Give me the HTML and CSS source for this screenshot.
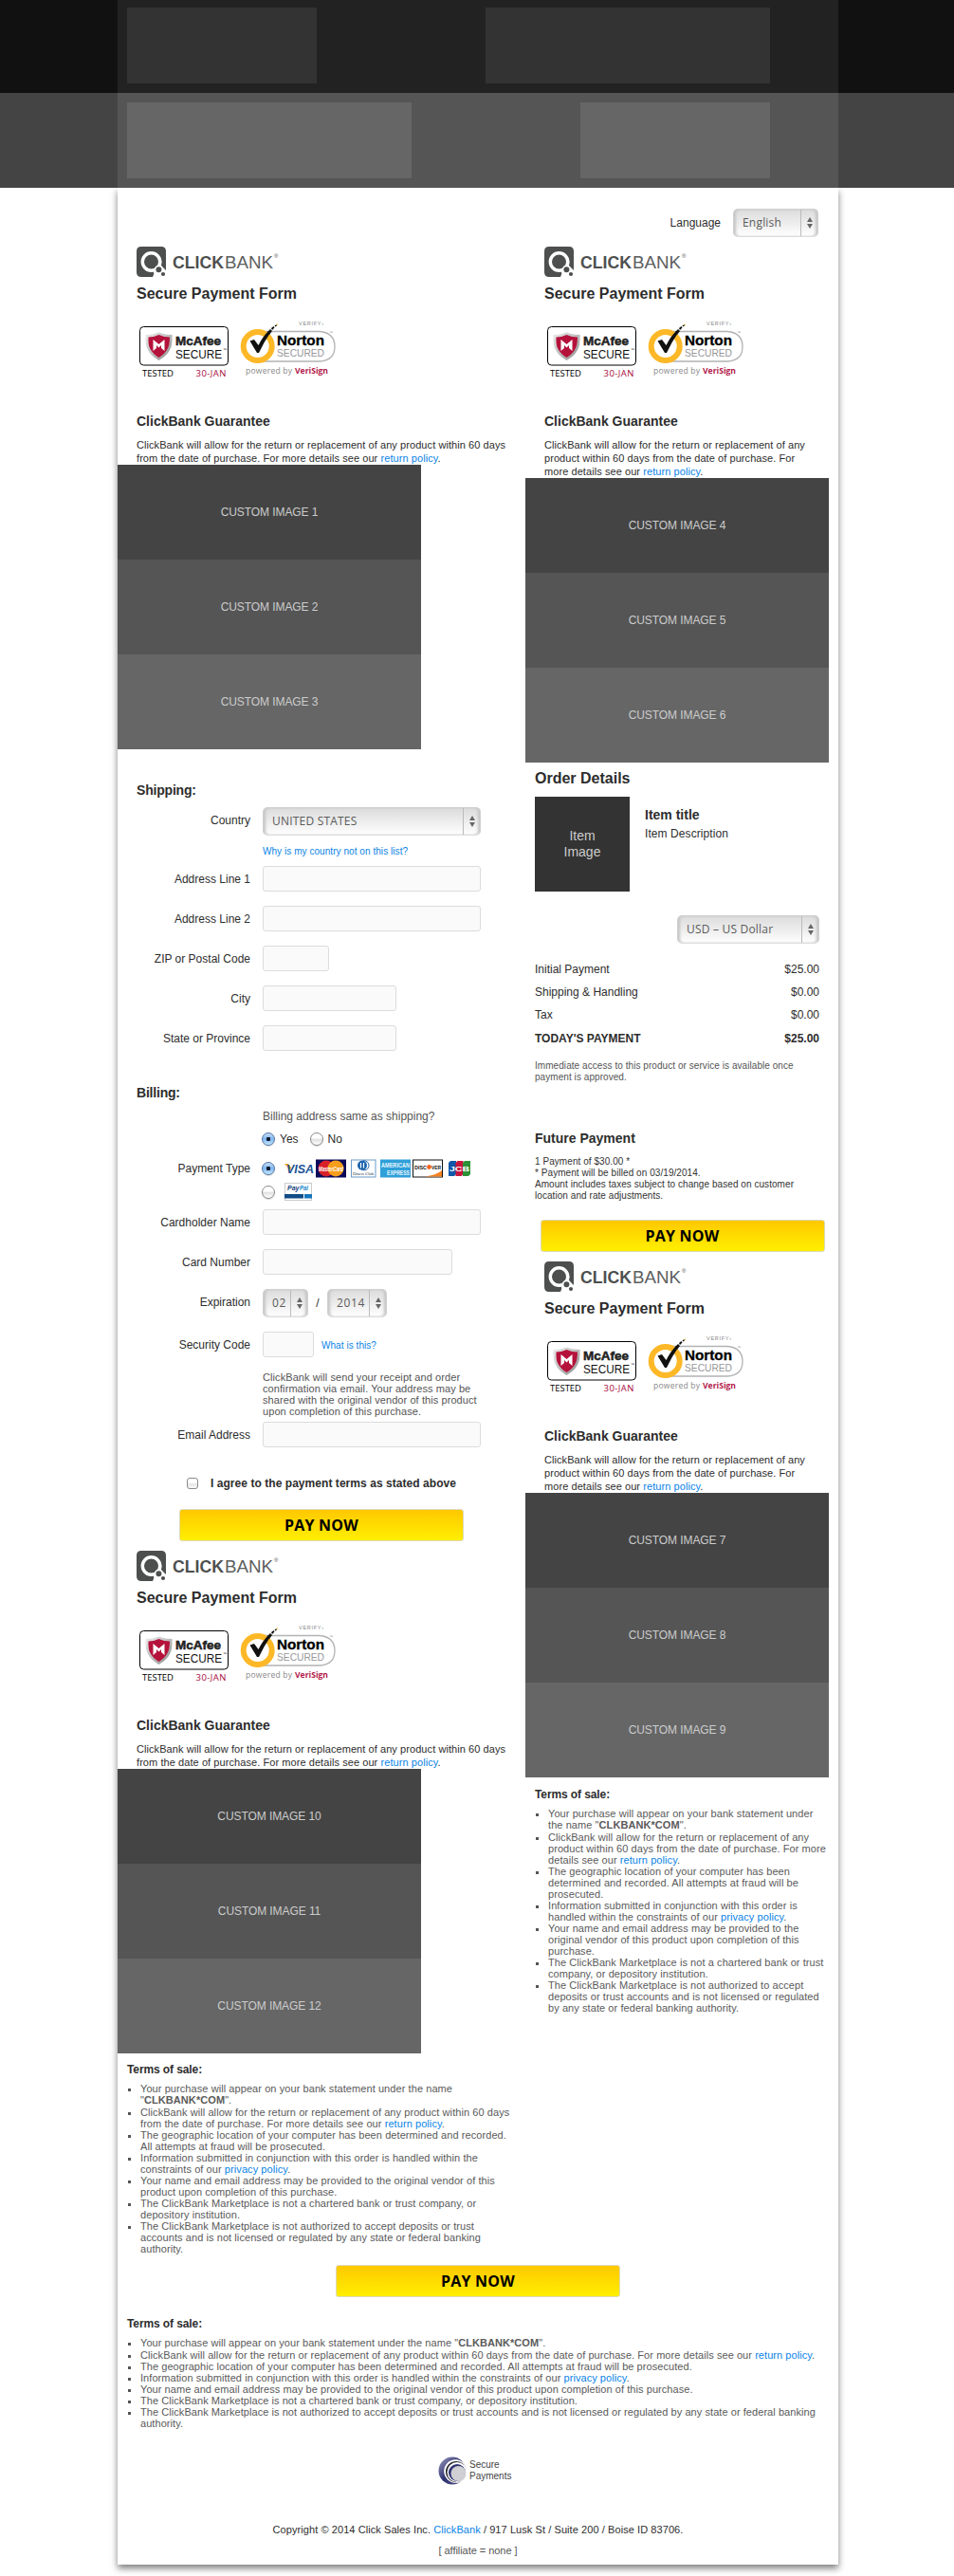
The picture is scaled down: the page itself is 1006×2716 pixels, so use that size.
FILE: index.html
```
<!DOCTYPE html>
<html lang="en">
<head>
<meta charset="utf-8">
<title>ClickBank Secure Payment Form</title>
<link rel="stylesheet" href="styles.css">
</head>
<body>
<svg class="defs" width="0" height="0" aria-hidden="true">
  <defs>
    <linearGradient id="silver" x1="0" y1="0" x2="1" y2="1"><stop offset="0" stop-color="#eee"/><stop offset="1" stop-color="#8c8c8c"/></linearGradient>
    <linearGradient id="swirl" x1="0" y1="0" x2="1" y2="1"><stop offset="0" stop-color="#9a9cc0"/><stop offset=".5" stop-color="#2f3270"/><stop offset="1" stop-color="#55588c"/></linearGradient>
    <symbol id="cb-mark" viewBox="0 0 32 32">
      <path d="M5 0H26Q31 0 31 5V25L26 20Q28 11 20 7Q12 4 7 11Q3 20 11 25Q15 27 18 26Q19 29 17 32H5Q0 32 0 27V5Q0 0 5 0Z" fill="#4d4f4f"/>
      <circle cx="15.5" cy="16" r="9.2" fill="#4d4f4f" stroke="#fff" stroke-width="3.4"/>
      <circle cx="23.4" cy="24.2" r="3.8" fill="#4d4f4f" stroke="#fff" stroke-width="1.6"/>
      <circle cx="28" cy="29" r="2.1" fill="#4d4f4f"/>
    </symbol>
    <symbol id="mcafee-art" viewBox="0 0 100 64">
      <rect x="3.5" y="8.5" width="93" height="40.500" rx="4" fill="#fff" stroke="#000"/>
      <path d="M9.500 17Q17 17 23.500 14.500Q30 17 37.500 17Q38 28 35 33Q32 39 23.500 44Q15 39 12 33Q9 28 9.500 17Z" fill="url(#silver)"/>
      <path d="M12.500 19.500Q18 19.500 23.500 17Q29 19.500 35 19.500Q35 28 32.500 32Q30 37 23.500 41Q17 37 14.500 32Q12 28 12.500 19.500Z" fill="#b5123b"/>
      <path d="M17.500 34V22L23.500 27L29.500 22V34L26 31V28L23.500 30.500L21 28V31Z" fill="#fff"/>
    </symbol>
    <symbol id="norton-art" viewBox="100 0 120 64">
      <path d="M127 13.500H193Q209 15 209 29.500Q209 44 193 45H127" fill="#fff" stroke="#b2b3b5" stroke-width="1.300"/>
      <circle cx="127.700" cy="29" r="15" fill="#fff" stroke="#fdb827" stroke-width="6"/>
      <path d="M119.500 23.500L124 22L128.500 28Q133 19 139 13L141 15Q134 25 129 36H127Z" fill="#111"/>
      <path d="M138 14l3-3 2 2-3 4zM142 10l2.500-2 1 1.500-2.500 2.500zM145.500 7.500l2-1.500.5 1.300-1.500 1.200z" fill="#111"/>
      <path d="M147 6.500l2-1v1.500z" fill="#fdb827"/>
    </symbol>
  </defs>
</svg>

<div class="band band-dark"><div class="band-inner"><div class="slot narrow"></div><div class="slot wide"></div></div></div>
<div class="band band-light"><div class="band-inner"><div class="slot wide"></div><div class="slot narrow"></div></div></div>

<main class="sheet">
  <div class="language"><label>Language</label><div class="select sel-lang"><span>English</span><i class="arrows"></i></div></div>

  <div class="columns">
    <div class="col-left">
      <section class="brand">
        <svg class="logo" width="170" height="32"><use href="#cb-mark" width="32" height="32"/><text class="lg-click" x="38" y="23" textLength="54" lengthAdjust="spacingAndGlyphs">CLICK</text><text class="lg-bank" x="93" y="23" textLength="51" lengthAdjust="spacingAndGlyphs">BANK</text><text class="lg-reg" x="145" y="12">®</text></svg>
        <h1>Secure Payment Form</h1>
        <svg class="badges" width="220" height="64"><use href="#mcafee-art" width="100" height="64"/><use href="#norton-art" x="100" width="120" height="64"/><text class="mc-name" x="41" y="28" textLength="48" lengthAdjust="spacingAndGlyphs">McAfee</text><text class="mc-secure" x="41" y="42" textLength="49" lengthAdjust="spacingAndGlyphs">SECURE</text><text class="tiny-tm" x="91" y="34">™</text><text class="mc-foot" x="6" y="61" textLength="33">TESTED</text><text class="mc-foot mc-date" x="62.500" y="61" textLength="32">30-JAN</text><text class="nt-verify" x="171" y="6.500" textLength="26">VERIFY›</text><text class="tiny-tm nt-tm" x="203" y="16">™</text><text class="nt-name" x="148" y="28" textLength="50" lengthAdjust="spacingAndGlyphs">Norton</text><text class="nt-secured" x="148" y="40" textLength="50" lengthAdjust="spacingAndGlyphs">SECURED</text><text class="nt-foot" x="115" y="58" textLength="49">powered by</text><text class="nt-vs" x="167" y="58" textLength="35" lengthAdjust="spacingAndGlyphs">VeriSign</text></svg>
        <h2>ClickBank Guarantee</h2>
        <p>ClickBank will allow for the return or replacement of any product within 60 days from the date of purchase. For more details see our <a>return policy</a>.</p>
      </section>
      <div class="images"><div>CUSTOM IMAGE 1</div><div>CUSTOM IMAGE 2</div><div>CUSTOM IMAGE 3</div></div>

      <h2 class="form-title shipping">Shipping:</h2>
      <div class="row tall"><label>Country</label><div class="select sel-country"><span>UNITED STATES</span><i class="arrows"></i></div></div>
      <div class="row link-row"><a class="small">Why is my country not on this list?</a></div>
      <div class="row"><label>Address Line 1</label><div class="input"></div></div>
      <div class="row"><label>Address Line 2</label><div class="input"></div></div>
      <div class="row"><label>ZIP or Postal Code</label><div class="input w70"></div></div>
      <div class="row"><label>City</label><div class="input w141"></div></div>
      <div class="row"><label>State or Province</label><div class="input w141"></div></div>

      <h2 class="form-title billing">Billing:</h2>
      <div class="row question">Billing address same as shipping?</div>
      <div class="row yesno"><i class="radio on"></i><span>Yes</span><i class="radio"></i><span>No</span></div>
      <div class="row pay-type"><label>Payment Type</label><i class="radio on"></i>
        <svg class="cards" width="200" height="20">
          <path d="M0 5h4l3 4-1 3z" fill="#f0a11f"/>
          <text class="visa" x="2" y="15" textLength="29" lengthAdjust="spacingAndGlyphs">VISA</text>
          <rect x="33" y=".5" width="32" height="19" fill="#0a0a5a"/><circle cx="44" cy="10" r="8.500" fill="#d8202a"/><circle cx="54" cy="10" r="8.500" fill="#f79e1b"/>
          <text class="mastercard" x="36" y="12.500" textLength="26" lengthAdjust="spacingAndGlyphs">MasterCard</text>
          <rect x="70.500" y="1" width="25.500" height="18" fill="#fff" stroke="#6a9bcb"/><circle cx="82" cy="6.800" r="5" fill="#1c63ad"/><circle cx="84" cy="6.800" r="5" fill="none" stroke="#1c63ad"/><path d="M80.500 4v5.600M83.500 4v5.600" stroke="#fff" stroke-width="1.200"/>
          <text class="diners" x="72" y="16.500" textLength="22" lengthAdjust="spacingAndGlyphs">Diners Club</text>
          <rect x="101" y=".5" width="32" height="19" fill="#2f9fd8"/>
          <text class="amex" x="102" y="8.500" textLength="30" lengthAdjust="spacingAndGlyphs">AMERICAN</text><text class="amex" x="108" y="16.500" textLength="24" lengthAdjust="spacingAndGlyphs">EXPRESS</text>
          <rect x="135.500" y="1" width="31" height="18" fill="#fff" stroke="#111"/><path d="M148 18.500Q160 17 166 12V18.500Z" fill="#f58220"/><circle cx="152.500" cy="8.500" r="2.400" fill="#f26522"/>
          <text class="discover" x="137" y="10.700" textLength="13" lengthAdjust="spacingAndGlyphs">DISC</text><text class="discover" x="155" y="10.700" textLength="10" lengthAdjust="spacingAndGlyphs">VER</text>
          <path d="M175 2h6v14l-2 2h-6V4z" fill="#1257a8"/><path d="M182.500 2h6v14l-2 2h-6V4z" fill="#c8153c"/><path d="M190 2h6v14l-2 2h-6V4z" fill="#2d9138"/>
          <text class="jcb" x="174" y="13" textLength="21" lengthAdjust="spacingAndGlyphs">JCB</text>
        </svg>
      </div>
      <div class="row paypal"><i class="radio"></i>
        <svg class="cards" width="30" height="20"><rect x=".5" y=".5" width="28" height="18" fill="#fff" stroke="#ccc"/><text class="pp" x="3" y="8" textLength="12.500" lengthAdjust="spacingAndGlyphs">Pay</text><text class="pp pal" x="16" y="8" textLength="9" lengthAdjust="spacingAndGlyphs">Pal</text><path d="M0 12h20v4.500H0z" fill="#114b86"/><path d="M21 12h8v4.500h-8z" fill="#1577bd"/></svg>
      </div>
      <div class="row"><label>Cardholder Name</label><div class="input"></div></div>
      <div class="row"><label>Card Number</label><div class="input w200"></div></div>
      <div class="row tall"><label>Expiration</label><div class="select sel-month"><span>02</span><i class="arrows"></i></div><em>/</em><div class="select sel-year"><span>2014</span><i class="arrows"></i></div></div>
      <div class="row"><label>Security Code</label><div class="input w54"></div><a class="small what">What is this?</a></div>
      <div class="row note"><p>ClickBank will send your receipt and order confirmation via email. Your address may be shared with the original vendor of this product upon completion of this purchase.</p></div>
      <div class="row"><label>Email Address</label><div class="input"></div></div>
      <div class="agree"><i class="check"></i><span>I agree to the payment terms as stated above</span></div>
      <div class="pay pay-left">PAY NOW</div>

      <section class="brand">
        <svg class="logo" width="170" height="32"><use href="#cb-mark" width="32" height="32"/><text class="lg-click" x="38" y="23" textLength="54" lengthAdjust="spacingAndGlyphs">CLICK</text><text class="lg-bank" x="93" y="23" textLength="51" lengthAdjust="spacingAndGlyphs">BANK</text><text class="lg-reg" x="145" y="12">®</text></svg>
        <h1>Secure Payment Form</h1>
        <svg class="badges" width="220" height="64"><use href="#mcafee-art" width="100" height="64"/><use href="#norton-art" x="100" width="120" height="64"/><text class="mc-name" x="41" y="28" textLength="48" lengthAdjust="spacingAndGlyphs">McAfee</text><text class="mc-secure" x="41" y="42" textLength="49" lengthAdjust="spacingAndGlyphs">SECURE</text><text class="tiny-tm" x="91" y="34">™</text><text class="mc-foot" x="6" y="61" textLength="33">TESTED</text><text class="mc-foot mc-date" x="62.500" y="61" textLength="32">30-JAN</text><text class="nt-verify" x="171" y="6.500" textLength="26">VERIFY›</text><text class="tiny-tm nt-tm" x="203" y="16">™</text><text class="nt-name" x="148" y="28" textLength="50" lengthAdjust="spacingAndGlyphs">Norton</text><text class="nt-secured" x="148" y="40" textLength="50" lengthAdjust="spacingAndGlyphs">SECURED</text><text class="nt-foot" x="115" y="58" textLength="49">powered by</text><text class="nt-vs" x="167" y="58" textLength="35" lengthAdjust="spacingAndGlyphs">VeriSign</text></svg>
        <h2>ClickBank Guarantee</h2>
        <p>ClickBank will allow for the return or replacement of any product within 60 days from the date of purchase. For more details see our <a>return policy</a>.</p>
      </section>
      <div class="images"><div>CUSTOM IMAGE 10</div><div>CUSTOM IMAGE 11</div><div>CUSTOM IMAGE 12</div></div>
      <section class="terms terms-left">
        <h3>Terms of sale:</h3>
        <ul>
          <li>Your purchase will appear on your bank statement under the name "<strong>CLKBANK*COM</strong>".</li>
          <li>ClickBank will allow for the return or replacement of any product within 60 days from the date of purchase. For more details see our <a>return policy</a>.</li>
          <li>The geographic location of your computer has been determined and recorded. All attempts at fraud will be prosecuted.</li>
          <li>Information submitted in conjunction with this order is handled within the constraints of our <a>privacy policy</a>.</li>
          <li>Your name and email address may be provided to the original vendor of this product upon completion of this purchase.</li>
          <li>The ClickBank Marketplace is not a chartered bank or trust company, or depository institution.</li>
          <li>The ClickBank Marketplace is not authorized to accept deposits or trust accounts and is not licensed or regulated by any state or federal banking authority.</li>
        </ul>
      </section>
    </div>

    <div class="col-right">
      <section class="brand">
        <svg class="logo" width="170" height="32"><use href="#cb-mark" width="32" height="32"/><text class="lg-click" x="38" y="23" textLength="54" lengthAdjust="spacingAndGlyphs">CLICK</text><text class="lg-bank" x="93" y="23" textLength="51" lengthAdjust="spacingAndGlyphs">BANK</text><text class="lg-reg" x="145" y="12">®</text></svg>
        <h1>Secure Payment Form</h1>
        <svg class="badges" width="220" height="64"><use href="#mcafee-art" width="100" height="64"/><use href="#norton-art" x="100" width="120" height="64"/><text class="mc-name" x="41" y="28" textLength="48" lengthAdjust="spacingAndGlyphs">McAfee</text><text class="mc-secure" x="41" y="42" textLength="49" lengthAdjust="spacingAndGlyphs">SECURE</text><text class="tiny-tm" x="91" y="34">™</text><text class="mc-foot" x="6" y="61" textLength="33">TESTED</text><text class="mc-foot mc-date" x="62.500" y="61" textLength="32">30-JAN</text><text class="nt-verify" x="171" y="6.500" textLength="26">VERIFY›</text><text class="tiny-tm nt-tm" x="203" y="16">™</text><text class="nt-name" x="148" y="28" textLength="50" lengthAdjust="spacingAndGlyphs">Norton</text><text class="nt-secured" x="148" y="40" textLength="50" lengthAdjust="spacingAndGlyphs">SECURED</text><text class="nt-foot" x="115" y="58" textLength="49">powered by</text><text class="nt-vs" x="167" y="58" textLength="35" lengthAdjust="spacingAndGlyphs">VeriSign</text></svg>
        <h2>ClickBank Guarantee</h2>
        <p>ClickBank will allow for the return or replacement of any product within 60 days from the date of purchase. For more details see our <a>return policy</a>.</p>
      </section>
      <div class="images"><div>CUSTOM IMAGE 4</div><div>CUSTOM IMAGE 5</div><div>CUSTOM IMAGE 6</div></div>

      <section class="order">
        <h1>Order Details</h1>
        <div class="item"><div class="item-image">Item<br>Image</div><div class="item-text"><h2>Item title</h2><p>Item Description</p></div></div>
        <div class="currency"><div class="select sel-usd"><span>USD – US Dollar</span><i class="arrows"></i></div></div>
        <dl class="totals">
          <dt>Initial Payment</dt><dd>$25.00</dd>
          <dt>Shipping &amp; Handling</dt><dd>$0.00</dd>
          <dt>Tax</dt><dd>$0.00</dd>
          <dt class="total">TODAY'S PAYMENT</dt><dd class="total">$25.00</dd>
        </dl>
        <p class="fine">Immediate access to this product or service is available once payment is approved.</p>
        <h2 class="future">Future Payment</h2>
        <p class="fine dark">1 Payment of $30.00 *<br>* Payment will be billed on 03/19/2014.<br>Amount includes taxes subject to change based on customer location and rate adjustments.</p>
      </section>
      <div class="pay pay-right">PAY NOW</div>

      <section class="brand">
        <svg class="logo" width="170" height="32"><use href="#cb-mark" width="32" height="32"/><text class="lg-click" x="38" y="23" textLength="54" lengthAdjust="spacingAndGlyphs">CLICK</text><text class="lg-bank" x="93" y="23" textLength="51" lengthAdjust="spacingAndGlyphs">BANK</text><text class="lg-reg" x="145" y="12">®</text></svg>
        <h1>Secure Payment Form</h1>
        <svg class="badges" width="220" height="64"><use href="#mcafee-art" width="100" height="64"/><use href="#norton-art" x="100" width="120" height="64"/><text class="mc-name" x="41" y="28" textLength="48" lengthAdjust="spacingAndGlyphs">McAfee</text><text class="mc-secure" x="41" y="42" textLength="49" lengthAdjust="spacingAndGlyphs">SECURE</text><text class="tiny-tm" x="91" y="34">™</text><text class="mc-foot" x="6" y="61" textLength="33">TESTED</text><text class="mc-foot mc-date" x="62.500" y="61" textLength="32">30-JAN</text><text class="nt-verify" x="171" y="6.500" textLength="26">VERIFY›</text><text class="tiny-tm nt-tm" x="203" y="16">™</text><text class="nt-name" x="148" y="28" textLength="50" lengthAdjust="spacingAndGlyphs">Norton</text><text class="nt-secured" x="148" y="40" textLength="50" lengthAdjust="spacingAndGlyphs">SECURED</text><text class="nt-foot" x="115" y="58" textLength="49">powered by</text><text class="nt-vs" x="167" y="58" textLength="35" lengthAdjust="spacingAndGlyphs">VeriSign</text></svg>
        <h2>ClickBank Guarantee</h2>
        <p>ClickBank will allow for the return or replacement of any product within 60 days from the date of purchase. For more details see our <a>return policy</a>.</p>
      </section>
      <div class="images"><div>CUSTOM IMAGE 7</div><div>CUSTOM IMAGE 8</div><div>CUSTOM IMAGE 9</div></div>
      <section class="terms terms-right">
        <h3>Terms of sale:</h3>
        <ul>
          <li>Your purchase will appear on your bank statement under the name "<strong>CLKBANK*COM</strong>".</li>
          <li>ClickBank will allow for the return or replacement of any product within 60 days from the date of purchase. For more details see our <a>return policy</a>.</li>
          <li>The geographic location of your computer has been determined and recorded. All attempts at fraud will be prosecuted.</li>
          <li>Information submitted in conjunction with this order is handled within the constraints of our <a>privacy policy</a>.</li>
          <li>Your name and email address may be provided to the original vendor of this product upon completion of this purchase.</li>
          <li>The ClickBank Marketplace is not a chartered bank or trust company, or depository institution.</li>
          <li>The ClickBank Marketplace is not authorized to accept deposits or trust accounts and is not licensed or regulated by any state or federal banking authority.</li>
        </ul>
      </section>
    </div>
  </div>

  <div class="pay pay-center">PAY NOW</div>
  <section class="terms terms-full">
    <h3>Terms of sale:</h3>
    <ul>
      <li>Your purchase will appear on your bank statement under the name "<strong>CLKBANK*COM</strong>".</li>
      <li>ClickBank will allow for the return or replacement of any product within 60 days from the date of purchase. For more details see our <a>return policy</a>.</li>
      <li>The geographic location of your computer has been determined and recorded. All attempts at fraud will be prosecuted.</li>
      <li>Information submitted in conjunction with this order is handled within the constraints of our <a>privacy policy</a>.</li>
      <li>Your name and email address may be provided to the original vendor of this product upon completion of this purchase.</li>
      <li>The ClickBank Marketplace is not a chartered bank or trust company, or depository institution.</li>
      <li>The ClickBank Marketplace is not authorized to accept deposits or trust accounts and is not licensed or regulated by any state or federal banking authority.</li>
    </ul>
  </section>

  <div class="secure">
    <svg width="30" height="30" viewBox="0 0 30 30"><circle cx="15" cy="15" r="14.500" fill="url(#swirl)"/><circle cx="18.500" cy="15.500" r="12.300" fill="#fff"/><circle cx="19" cy="16" r="11" fill="#26262e"/><circle cx="20" cy="16.500" r="10.500" fill="#fff"/><circle cx="20" cy="17" r="9" fill="#2f3270"/><circle cx="21.500" cy="18" r="8" fill="#cfcfd4"/></svg>
    <span>Secure<br>Payments</span>
  </div>
  <footer>
    <p>Copyright © 2014 Click Sales Inc. <a>ClickBank</a> / 917 Lusk St / Suite 200 / Boise ID 83706.</p>
    <p class="affiliate">[ affiliate = none ]</p>
  </footer>
</main>
</body>
</html>
```
FILE: styles.css
```
* { box-sizing: border-box; }
body { margin: 0; background: #fff; color: #2d2d2d; font: 12px/14px "Liberation Sans", Arial, sans-serif; }
h1, h2, h3, p, ul, dl, dd { margin: 0; padding: 0; }
h1 { font-size: 16px; line-height: 20px; }
h2 { font-size: 14px; line-height: 18px; }
h3 { font-size: 12px; line-height: 14px; letter-spacing: -.1px; }
a { color: #0a84e6; text-decoration: none; }
em { font-style: normal; }
.defs { position: absolute; }

/* Header bands */
.band-inner { width: 760px; margin: 0 auto 0 124px; display: flex; justify-content: space-between; padding-left: 10px; padding-right: 72px; }
.band-dark { background: #111; }
.band-dark .band-inner { background: #222; height: 98px; padding-top: 8px; }
.band-dark .slot { background: #333; }
.band-light { background: #444; }
.band-light .band-inner { background: #555; height: 100px; padding-top: 10px; }
.band-light .slot { background: #666; }
.slot { height: 80px; }
.narrow { width: 200px; }
.wide { width: 300px; }

.sheet { width: 760px; height: 2506px; margin: 0 auto 12px 124px; background: #fff; box-shadow: 0 4px 7px rgba(0, 0, 0, .5); clip-path: inset(0 -12px -12px -12px); }
.language { height: 62px; padding: 22px 21px 0 0; display: flex; justify-content: flex-end; gap: 13px; }
.language label { line-height: 30px; }
.columns { display: grid; grid-template-columns: 430px 330px; height: 2128px; align-items: start; }

/* Brand block */
.brand { padding: 0 20px; }
.brand svg { display: block; }
.brand h1 { margin-top: 8px; }
.brand .badges { margin-top: 16px; }
.brand h2 { margin-top: 35px; }
.brand p { margin: 9px -15px 0 0; font-size: 11px; letter-spacing: .072px; }
.col-right .brand p { margin-right: 0; }
svg text { font-family: "Liberation Sans", Arial, sans-serif; }
.lg-click { font: bold 19px "Liberation Sans", sans-serif; fill: #4d4f4f; }
.lg-bank { font-size: 19px; fill: #5c5e5e; }
.lg-reg { font-size: 6px; fill: #4d4f4f; }
svg .mc-name { font: bold 13px "Liberation Sans", sans-serif; fill: #222; stroke: #222; stroke-width: .5px; }
svg .mc-secure { font: 13.500px "Liberation Sans", sans-serif; fill: #111; }
svg .mc-foot { font: 9.500px "Open Sans", sans-serif; fill: #000; }
svg .mc-date { fill: #a6093d; }
.tiny-tm { font-size: 4px; }
.nt-tm { fill: #888; }
.nt-verify { font-size: 5.500px; fill: #888; }
svg .nt-name { font: bold 15px "Liberation Sans", sans-serif; fill: #000; stroke: #000; stroke-width: .3px; }
.nt-secured { font-size: 11px; fill: #97989a; }
svg .nt-foot { font: 500 8.500px "Open Sans", sans-serif; fill: #888; }
svg .nt-vs { font: bold 8.500px "Open Sans", sans-serif; fill: #b2194a; }

.images { width: 320px; color: #ccc; text-align: center; line-height: 100px; letter-spacing: -.08px; }
.images div { height: 100px; background: #444; }
.images div:nth-child(2) { background: #555; }
.images div:nth-child(3) { background: #666; }

/* Form */
.form-title { padding-left: 20px; letter-spacing: -.2px; }
.shipping { margin: 34px 0 9px; }
.billing { margin: 35px 0 9px; }
.row { display: flex; height: 27px; margin-bottom: 15px; padding-left: 153px; }
.row label { width: 140px; margin-left: -153px; margin-right: 13px; text-align: right; line-height: 28px; }
.tall { height: 30px; }
.link-row { height: 12px; margin: -4px 0 9px; }
.small { font-size: 10px; line-height: 12px; letter-spacing: .055px; }
.input { width: 230px; height: 27px; background: #fafafa; border: 1px solid #dcdcdc; border-radius: 3px; }
.w70 { width: 70px; }
.w141 { width: 141px; }
.w200 { width: 200px; }
.w54 { width: 54px; }
.question { height: 14px; margin-bottom: 9px; color: #555; }
.yesno { height: 16px; margin-bottom: 13px; padding-left: 152px; line-height: 16px; align-items: center; }
.yesno span { margin: 0 12px 0 5px; }
.radio { flex: none; width: 14px; height: 14px; border: 1px solid #8a8a8a; border-radius: 50%; background: linear-gradient(#fff 40%, #e2e2e2 55%, #fff); box-shadow: 0 1px 1px rgba(0, 0, 0, .15); }
.radio.on { border-color: #5574a5; background: radial-gradient(circle at 50% 50%, #111a2c 0 2px, transparent 2.500px), linear-gradient(#c5ddf7, #7fb5f0 50%, #c4eaff); }
.pay-type { height: 20px; margin-bottom: 5px; padding-left: 152px; align-items: center; }
.pay-type label { margin-left: -152px; margin-right: 12px; line-height: 20px; }
.cards { margin-left: 10px; }
.paypal { height: 20px; margin-bottom: 8px; padding-left: 152px; align-items: center; }
svg .visa { font: italic bold 13.500px "Liberation Sans", sans-serif; fill: #1b5294; }
svg .mastercard { font: italic bold 6.500px "Liberation Sans", sans-serif; fill: #fff; }
svg .diners { font: 5px "Liberation Serif", serif; fill: #234; }
svg .amex { font: bold 6.500px "Liberation Sans", sans-serif; fill: #e5f5ff; }
svg .discover { font: bold 6px "Liberation Sans", sans-serif; fill: #111; }
svg .jcb { font: bold 8px "Liberation Sans", sans-serif; fill: #fff; }
svg .pp { font: italic bold 7.500px "Liberation Sans", sans-serif; fill: #17427c; }
svg .pal { fill: #1b86cc; }
.row em { width: 20px; text-align: center; line-height: 30px; }
.what { margin: 9px 0 0 8px; }
.note { height: 48px; margin-bottom: 5px; color: #555; }
.note p { width: 232px; font-size: 11px; line-height: 12px; letter-spacing: .08px; }
.agree { margin: 31px 0 20px; padding-left: 73px; display: flex; height: 14px; gap: 13px; font-weight: bold; letter-spacing: .05px; }
.check { width: 12px; height: 12px; margin-top: 1px; border: 1px solid #8a8a8a; border-radius: 3px; background: linear-gradient(#fff 40%, #e6e6e6 60%, #fafafa); }

/* Selects */
.select { display: flex; justify-content: space-between; height: 30px; padding-left: 9px; border: 1px solid #d0d0d0; border-bottom-color: #ddd; border-radius: 5px; background: linear-gradient(#dcdcdc, #f0f0f0 60%, #fff); box-shadow: inset 3px 0 3px -1px #c4c4c4, inset -3px 0 3px -1px #c4c4c4; color: #5b5b5b; font: 12px/27px "Open Sans", sans-serif; letter-spacing: .2px; }
.arrows { width: 18px; border-left: 1px solid #bbb; display: flex; flex-direction: column; align-items: center; justify-content: center; gap: 2px; }
.arrows::before, .arrows::after { content: ""; border: 3px solid transparent; }
.arrows::before { border-top: 0; border-bottom: 5px solid #666; }
.arrows::after { border-bottom: 0; border-top: 5px solid #666; }
.sel-lang { width: 90px; }
.sel-country { width: 230px; }
.sel-month { width: 48px; }
.sel-year { width: 63px; }
.sel-month, .sel-year { letter-spacing: .6px; }
.sel-usd { width: 150px; }

.pay { width: 300px; height: 34px; border: 1px solid #ddd9b8; border-radius: 3px; background: linear-gradient(#ffc800, #ffef00); color: #000; text-align: center; font: bold 16px/32px "Open Sans", sans-serif; letter-spacing: .22px; }
.pay-left { margin: 0 0 10px 65px; }
.pay-right { margin: 19px 0 10px 15.500px; }
.pay-center { margin: 0 auto 21px; }

/* Order details */
.order { padding: 7px 20px 0 10px; }
.order .item { display: flex; gap: 16px; margin-top: 9px; height: 100px; }
.item-image { width: 100px; height: 100px; padding-top: 33px; background: #333; color: #ccc; font-size: 14px; line-height: 17px; text-align: center; }
.item-text h2 { margin-top: 10px; }
.item-text p { margin-top: 4px; letter-spacing: .08px; }
.currency { display: flex; justify-content: flex-end; margin-top: 25px; }
.totals { display: grid; grid-template-columns: 1fr auto; row-gap: 10px; margin-top: 20px; }
.totals dd { text-align: right; }
.totals .total { font-weight: bold; padding-top: 1px; }
.fine { margin: 16px -12px 0 0; width: 284px; color: #555; font-size: 10px; line-height: 12px; letter-spacing: .06px; }
.future { margin-top: 49px; }
.fine.dark { margin-top: 10px; color: #333; }

/* Terms */
.terms h3 { margin-bottom: 7px; }
.terms ul { list-style: none; font-size: 11px; line-height: 12px; color: #5a5a5a; letter-spacing: .075px; }
.terms li { padding-left: 14px; background: linear-gradient(#555, #555) no-repeat 1px 6px / 3px 3px; }
.terms li:first-child { padding-bottom: 1px; }
.terms-left { padding: 10px 10px 0; }
.terms-left ul { width: 410px; }
.terms-right { padding: 11px 0 0 10px; }
.terms-right ul { width: 309px; }
.terms-full { padding: 0 10px; }
.terms-full ul { width: 740px; letter-spacing: .06px; }

.secure { display: flex; gap: 3px; margin-top: 29px; padding-left: 338px; font-size: 10px; line-height: 12px; color: #444; }
.secure span { padding-top: 3px; }
footer { margin-top: 40px; text-align: center; font-size: 11px; letter-spacing: .075px; }
footer .affiliate { margin-top: 8px; color: #555; letter-spacing: -.04px; }
```
